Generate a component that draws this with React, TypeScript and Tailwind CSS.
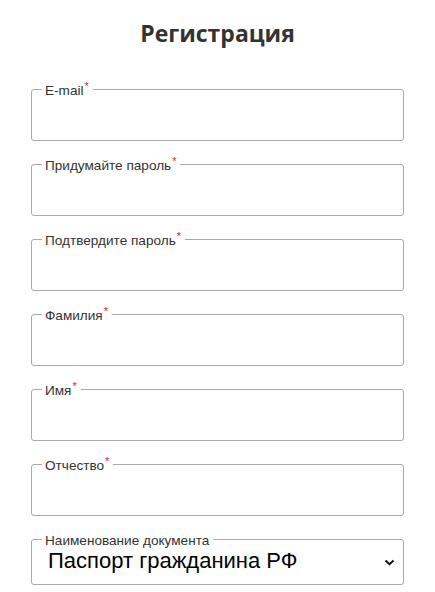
import React from "react";

const fields = [
  "E-mail",
  "Придумайте пароль",
  "Подтвердите пароль",
  "Фамилия",
  "Имя",
  "Отчество",
];

function Legend({ text, required }: { text: string; required?: boolean }) {
  return (
    <legend className="pl-[3px] pr-[4px] pt-[3px] text-[13.6px] leading-[16px] text-[#333] font-['Liberation_Sans',Arial,sans-serif]">
      {text}
      {required && (
        <span className="relative -top-[5px] ml-[1px] text-[11px] leading-none text-[#e02020]">*</span>
      )}
    </legend>
  );
}

export default function App() {
  return (
    <div className="w-[435px] min-h-[592px] bg-white px-[31px] pt-[16px] font-['Liberation_Sans',Arial,sans-serif]">
      <h1 className="text-center text-[23px] leading-[34px] font-bold text-[#333] font-['Open_Sans',sans-serif]">
        Регистрация
      </h1>
      <div className="mt-[30px] flex flex-col gap-[14px]">
        {fields.map((f) => (
          <fieldset
            key={f}
            className="m-0 border border-[#aaa] rounded-[3px] px-[10px] pb-0 pt-0"
          >
            <Legend text={f} required />
            <input
              type="text"
              className="block h-[41px] w-full border-0 bg-transparent outline-none"
            />
          </fieldset>
        ))}
        <fieldset className="relative m-0 border border-[#aaa] rounded-[3px] px-[10px] pb-0 pt-0">
          <Legend text="Наименование документа" />
          <div className="relative h-[35px]">
            <select className="block h-[24px] w-full appearance-none border-0 bg-transparent pl-[6px] text-[22px] leading-[24px] text-black outline-none font-['Liberation_Sans',Arial,sans-serif]">
              <option>Паспорт гражданина РФ</option>
            </select>
            <svg
              className="pointer-events-none absolute right-[-2px] top-[10px]"
              width="11"
              height="7"
              viewBox="0 0 11 7"
            >
              <path d="M1.5 1.5 L5.5 5.2 L9.5 1.5" fill="none" stroke="#111" strokeWidth="2" />
            </svg>
          </div>
        </fieldset>
      </div>
    </div>
  );
}
